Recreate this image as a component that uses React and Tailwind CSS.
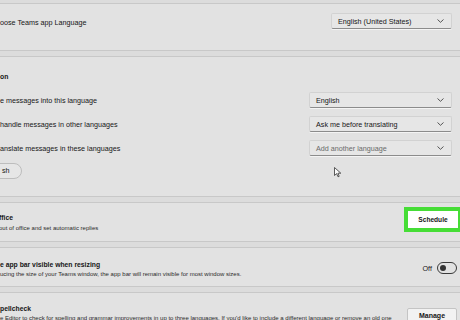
import React from "react";

function Chevron() {
  return (
    <svg width="7" height="4" viewBox="0 0 7 4" className="shrink-0">
      <path d="M0.5 0.5 L3.5 3.3 L6.5 0.5" fill="none" stroke="#444" strokeWidth="0.9" />
    </svg>
  );
}

function Dropdown({ label, width, muted }) {
  return (
    <div
      className={`${width} h-[16px] flex items-center justify-between pl-[6px] pr-[7px] bg-[#e6e6e6] border border-[#d2d2d2] border-b-[#8c8c8c] rounded-[2px] shadow-[0_1px_0_#f4f4f4]`}
    >
      <span className={`text-[7.2px] leading-[9px] ${muted ? "text-[#6a6a6a]" : "text-[#161616]"}`}>{label}</span>
      <Chevron />
    </div>
  );
}

function Gap() {
  return <div className="h-[7px] bg-[#dcdcdc] border-y border-[#c8c8c8]" />;
}

function Row({ label, children }) {
  return (
    <div className="flex items-center justify-between pr-[8px]">
      <span className="text-[7.2px] leading-[9px] text-[#161616]">{label}</span>
      {children}
    </div>
  );
}

export default function App() {
  return (
    <div className="relative w-[460px] h-[320px] overflow-hidden bg-[#e2e2e2] font-['Liberation_Sans',Arial,sans-serif] text-[#161616]">
      {/* top edge */}
      <div className="h-[4px] bg-[#dcdcdc] border-b border-[#c8c8c8]" />

      {/* App language */}
      <div className="h-[46px] flex items-start justify-between pt-[9px] pr-[8px]">
        <span className="text-[7.2px] leading-[9px] mt-[5px]">oose Teams app Language</span>
        <Dropdown label="English (United States)" width="w-[121px]" />
      </div>

      <Gap />

      {/* Translation */}
      <div className="h-[139px] pt-[15px]">
        <div className="text-[6.8px] leading-[10px] font-bold">on</div>
        <div className="mt-[10px] flex flex-col gap-[8px]">
          <Row label="e messages into this language">
            <Dropdown label="English" width="w-[143px]" />
          </Row>
          <Row label="handle messages in other languages">
            <Dropdown label="Ask me before translating" width="w-[143px]" />
          </Row>
          <Row label="anslate messages in these languages">
            <Dropdown label="Add another language" width="w-[143px]" muted />
          </Row>
        </div>
        <div className="mt-[6px] -ml-[20px] inline-flex h-[16px] items-center pl-[21px] pr-[11px] rounded-full border border-[#bdbdbd] bg-[#e6e6e6]">
          <span className="text-[7.2px] leading-[9px]">sh</span>
        </div>
      </div>

      <Gap />

      {/* Out of office */}
      <div className="h-[38px] flex items-start justify-between">
        <div className="pt-[10px] -ml-[1px]">
          <div className="text-[6.8px] leading-[10px] font-bold">ffice</div>
          <div className="text-[6px] leading-[8px] mt-[1px] text-[#2a2a2a]">out of office and set automatic replies</div>
        </div>
        <div className="mt-[4px] -mr-[2px] w-[58px] h-[25px] border-[4px] border-[#46dd36] bg-white flex items-center justify-center">
          <span className="text-[6.6px] font-bold">Schedule</span>
        </div>
      </div>

      <Gap />

      {/* App bar */}
      <div className="h-[38px] flex items-start justify-between pr-[3px]">
        <div className="pt-[12px]">
          <div className="text-[6.8px] leading-[10px] font-bold">e app bar visible when resizing</div>
          <div className="text-[6px] leading-[8px] text-[#2a2a2a]">
            ucing the size of your Teams window, the app bar will remain visible for most window sizes.
          </div>
        </div>
        <div className="pt-[14px] flex items-center gap-[5px]">
          <span className="text-[7.2px] leading-[9px]">Off</span>
          <div className="w-[20px] h-[12px] rounded-full border border-[#3a3a3a] flex items-center pl-[2px]">
            <div className="w-[6px] h-[6px] rounded-full bg-[#333]" />
          </div>
        </div>
      </div>

      <Gap />

      {/* Spellcheck */}
      <div className="h-[40px] flex items-start justify-between pr-[3px]">
        <div className="pt-[11px]">
          <div className="text-[6.8px] leading-[10px] font-bold">pellcheck</div>
          <div className="text-[6px] leading-[8px] text-[#2a2a2a] whitespace-nowrap">
            e Editor to check for spelling and grammar improvements in up to three languages. If you'd like to include a different language or remove an old one
          </div>
        </div>
        <div className="mt-[15px] w-[50px] h-[16px] shrink-0 bg-[#f2f2f2] border border-[#c4c4c4] rounded-[2px] flex items-center justify-center">
          <span className="text-[7px] font-bold">Manage</span>
        </div>
      </div>

      {/* mouse cursor */}
      <svg className="absolute left-[334px] top-[167px]" width="8" height="11" viewBox="0 0 8 11">
        <path d="M0.5 0.5 L0.5 8.5 L2.6 6.6 L4 9.8 L5.2 9.3 L3.9 6.2 L6.8 6.2 Z" fill="#fafafa" stroke="#333" strokeWidth="0.8" strokeLinejoin="round" />
      </svg>
    </div>
  );
}
